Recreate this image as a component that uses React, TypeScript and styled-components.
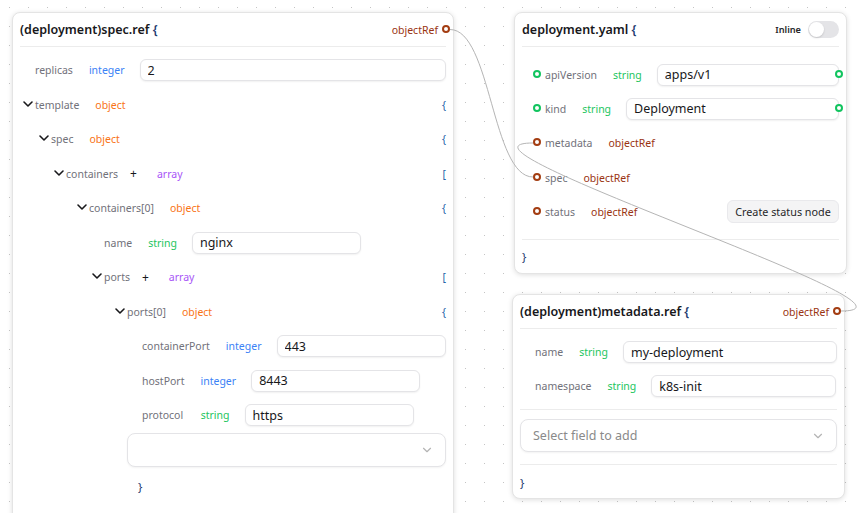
import styled, { createGlobalStyle } from "styled-components";
import { ChevronDown } from "lucide-react";

const GlobalStyle = createGlobalStyle`
  html, body {
    margin: 0;
    height: 100%;
    overflow: hidden;
    background: #fff;
  }
`;

const Canvas = styled.div`
  position: relative;
  width: 858px;
  height: 513px;
  overflow: hidden;
  font-family: "Noto Sans", "Open Sans", sans-serif;
  background-color: #fff;
  background-image: radial-gradient(circle, #c4c4c4 0.7px, transparent 0.9px);
  background-size: 19px 19px;
  background-position: 0px -2px;
`;

const Node = styled.div<{ $x: number; $y: number; $w: number; $h: number }>`
  position: absolute;
  left: ${(p) => p.$x}px;
  top: ${(p) => p.$y}px;
  width: ${(p) => p.$w}px;
  height: ${(p) => p.$h}px;
  box-sizing: border-box;
  padding: 0 7px;
  background: #fff;
  border: 1px solid #e4e4e4;
  border-radius: 8px;
  box-shadow: 0 1px 5px rgba(0, 0, 0, 0.13);
`;

const Header = styled.div`
  display: flex;
  align-items: center;
  height: 33px;
  border-bottom: 1px solid #ececec;
`;

const Title = styled.div`
  font-size: 12.5px;
  font-weight: 600;
  line-height: 32px;
  color: #18181b;
  white-space: nowrap;
`;

const Brace = styled.span`
  color: #1e3a6e;
`;

const HeaderRight = styled.div<{ $overhang?: number }>`
  margin-left: auto;
  margin-right: ${(p) => -(p.$overhang ?? 0)}px;
  display: flex;
  align-items: center;
  gap: 4px;
`;

const Body = styled.div<{ $top: number; $gap: number }>`
  display: flex;
  flex-direction: column;
  gap: ${(p) => p.$gap}px;
  padding-top: ${(p) => p.$top}px;
`;

const Row = styled.div<{ $indent: number }>`
  position: relative;
  display: flex;
  align-items: center;
  height: 22px;
  padding-left: ${(p) => p.$indent}px;
`;

const Toggle = styled(ChevronDown)`
  flex: none;
  width: 16px;
  height: 16px;
  margin: -2px -0.5px 0 -1.5px;
  color: #18181b;
  stroke-width: 2.4;
`;

const Label = styled.span<{ $mr?: number }>`
  font-size: 10.5px;
  color: #71717a;
  white-space: nowrap;
  margin-right: ${(p) => p.$mr ?? 16}px;
`;

const TYPE_COLORS: Record<string, string> = {
  integer: "#3b82f6",
  object: "#f97316",
  array: "#a855f7",
  string: "#22c55e",
  objectRef: "#9a3412",
};

const Type = styled.span<{ $kind: string }>`
  font-size: 10.5px;
  color: ${(p) => TYPE_COLORS[p.$kind]};
  white-space: nowrap;
`;

const Plus = styled.span`
  font-size: 12px;
  color: #18181b;
  margin-right: 20px;
  margin-left: -4px;
`;

const OpenBracket = styled.span`
  margin-left: auto;
  font-size: 10.5px;
  color: #2563a8;
`;

const Field = styled.input<{ $w: number }>`
  box-sizing: border-box;
  flex: none;
  width: ${(p) => p.$w}px;
  height: 22px;
  margin-left: 15px;
  padding: 0 7px;
  font-family: inherit;
  font-size: 12.5px;
  color: #18181b;
  background: #fff;
  border: 1px solid #e4e4e7;
  border-radius: 6px;
  box-shadow: 0 1px 2px rgba(0, 0, 0, 0.06);
  outline: none;
`;

const Dot = styled.span<{ $color: string }>`
  flex: none;
  box-sizing: border-box;
  width: 8px;
  height: 8px;
  margin-top: -1px;
  border-radius: 50%;
  background: #fff;
  border: 2px solid ${(p) => p.$color};
`;

const LeadDot = styled(Dot)`
  margin-right: 4px;
  margin-top: -2px;
`;

const TrailDot = styled(Dot)`
  position: absolute;
  right: -4px;
  top: 6px;
  margin-top: 0;
`;

const SelectBox = styled.div<{ $ml: number; $mt: number; $h: number }>`
  box-sizing: border-box;
  display: flex;
  align-items: center;
  justify-content: space-between;
  height: ${(p) => p.$h}px;
  margin-left: ${(p) => p.$ml}px;
  margin-top: ${(p) => p.$mt}px;
  padding: 0 11.5px 0 12px;
  font-size: 12.5px;
  color: #8a8a8a;
  background: #fff;
  border: 1px solid #e4e4e7;
  border-radius: 8px;
  box-shadow: 0 1px 2px rgba(0, 0, 0, 0.05);
`;

const SelectIcon = styled(ChevronDown)`
  width: 14px;
  height: 14px;
  color: #b4b4b4;
`;

const CloseLine = styled.div<{ $ml: number; $mt: number }>`
  margin-left: ${(p) => p.$ml}px;
  margin-top: ${(p) => p.$mt}px;
  font-size: 11.5px;
  line-height: 16px;
  color: #1e3a6e;
`;

const Divider = styled.div<{ $mt: number }>`
  height: 1px;
  margin-top: ${(p) => p.$mt}px;
  background: #ececec;
`;

const InlineLabel = styled.span`
  font-size: 9.2px;
  font-weight: 600;
  color: #27272a;
  margin-right: 3px;
`;

const Switch = styled.div`
  box-sizing: border-box;
  width: 31px;
  height: 17px;
  padding: 1px;
  border-radius: 9px;
  background: #e4e4e7;
`;

const Knob = styled.div`
  width: 15px;
  height: 15px;
  border-radius: 50%;
  background: #fff;
  box-shadow: 0 1px 2px rgba(0, 0, 0, 0.15);
`;

const ActionButton = styled.button`
  margin-left: auto;
  width: 112px;
  height: 23px;
  padding: 0;
  font-family: inherit;
  font-size: 10.8px;
  color: #27272a;
  background: #f4f4f5;
  border: 1px solid #e9e9ec;
  border-radius: 6px;
`;

const EdgeLayer = styled.svg`
  position: absolute;
  left: 0;
  top: 0;
  pointer-events: none;
`;

const Edge = styled.path`
  fill: none;
  stroke: #b5b5b5;
  stroke-width: 1;
`;

const BROWN = "#a33d12";
const GREEN = "#12c45f";

export default function App() {
  return (
    <>
      <GlobalStyle />
      <Canvas>
        <Node $x={12} $y={12} $w={442} $h={560}>
          <Header>
            <Title>
              (deployment)spec.ref <Brace>{"{"}</Brace>
            </Title>
            <HeaderRight $overhang={4}>
              <Type $kind="objectRef">objectRef</Type>
              <Dot $color={BROWN} />
            </HeaderRight>
          </Header>
          <Body $top={12.2} $gap={12.5}>
            <Row $indent={15}>
              <Label>replicas</Label>
              <Type $kind="integer">integer</Type>
              <Field $w={306} readOnly value="2" />
            </Row>
            <Row $indent={1}>
              <Toggle />
              <Label>template</Label>
              <Type $kind="object">object</Type>
              <OpenBracket>{"{"}</OpenBracket>
            </Row>
            <Row $indent={17}>
              <Toggle />
              <Label>spec</Label>
              <Type $kind="object">object</Type>
              <OpenBracket>{"{"}</OpenBracket>
            </Row>
            <Row $indent={32}>
              <Toggle />
              <Label>containers</Label>
              <Plus>+</Plus>
              <Type $kind="array">array</Type>
              <OpenBracket>[</OpenBracket>
            </Row>
            <Row $indent={55}>
              <Toggle />
              <Label>containers[0]</Label>
              <Type $kind="object">object</Type>
              <OpenBracket>{"{"}</OpenBracket>
            </Row>
            <Row $indent={84}>
              <Label>name</Label>
              <Type $kind="string">string</Type>
              <Field $w={169} readOnly value="nginx" />
            </Row>
            <Row $indent={70}>
              <Toggle />
              <Label>ports</Label>
              <Plus>+</Plus>
              <Type $kind="array">array</Type>
              <OpenBracket>[</OpenBracket>
            </Row>
            <Row $indent={93}>
              <Toggle />
              <Label>ports[0]</Label>
              <Type $kind="object">object</Type>
              <OpenBracket>{"{"}</OpenBracket>
            </Row>
            <Row $indent={122}>
              <Label>containerPort</Label>
              <Type $kind="integer">integer</Type>
              <Field $w={169} readOnly value="443" />
            </Row>
            <Row $indent={122}>
              <Label>hostPort</Label>
              <Type $kind="integer">integer</Type>
              <Field $w={169} readOnly value="8443" />
            </Row>
            <Row $indent={122}>
              <Label $mr={17.5}>protocol</Label>
              <Type $kind="string">string</Type>
              <Field $w={169} readOnly value="https" />
            </Row>
          </Body>
          <SelectBox $ml={107} $mt={6.8} $h={34}>
            <span />
            <SelectIcon />
          </SelectBox>
          <CloseLine $ml={118} $mt={12}>
            {"}"}
          </CloseLine>
        </Node>

        <Node $x={514} $y={12} $w={333} $h={262}>
          <Header>
            <Title>
              deployment.yaml <Brace>{"{"}</Brace>
            </Title>
            <HeaderRight>
              <InlineLabel>Inline</InlineLabel>
              <Switch>
                <Knob />
              </Switch>
            </HeaderRight>
          </Header>
          <Body $top={16.7} $gap={12.3}>
            <Row $indent={11}>
              <LeadDot $color={GREEN} />
              <Label>apiVersion</Label>
              <Type $kind="string">string</Type>
              <Field $w={182} readOnly value="apps/v1" />
              <TrailDot $color={GREEN} />
            </Row>
            <Row $indent={11}>
              <LeadDot $color={GREEN} />
              <Label>kind</Label>
              <Type $kind="string">string</Type>
              <Field $w={213} readOnly value="Deployment" />
              <TrailDot $color={GREEN} />
            </Row>
            <Row $indent={11}>
              <LeadDot $color={BROWN} />
              <Label>metadata</Label>
              <Type $kind="objectRef">objectRef</Type>
            </Row>
            <Row $indent={11}>
              <LeadDot $color={BROWN} />
              <Label>spec</Label>
              <Type $kind="objectRef">objectRef</Type>
            </Row>
            <Row $indent={11}>
              <LeadDot $color={BROWN} />
              <Label>status</Label>
              <Type $kind="objectRef">objectRef</Type>
              <ActionButton>Create status node</ActionButton>
            </Row>
          </Body>
          <Divider $mt={15.8} />
          <CloseLine $ml={0} $mt={9}>
            {"}"}
          </CloseLine>
        </Node>

        <Node $x={512} $y={294} $w={333} $h={205}>
          <Header>
            <Title>
              (deployment)metadata.ref <Brace>{"{"}</Brace>
            </Title>
            <HeaderRight $overhang={4}>
              <Type $kind="objectRef">objectRef</Type>
              <Dot $color={BROWN} />
            </HeaderRight>
          </Header>
          <Body $top={12} $gap={12}>
            <Row $indent={15}>
              <Label>name</Label>
              <Type $kind="string">string</Type>
              <Field $w={214} readOnly value="my-deployment" />
            </Row>
            <Row $indent={15}>
              <Label>namespace</Label>
              <Type $kind="string">string</Type>
              <Field $w={185} readOnly value="k8s-init" />
            </Row>
          </Body>
          <Divider $mt={12} />
          <SelectBox $ml={0} $mt={9} $h={33}>
            Select field to add
            <SelectIcon />
          </SelectBox>
          <Divider $mt={12} />
          <CloseLine $ml={0} $mt={10}>
            {"}"}
          </CloseLine>
        </Node>

        <EdgeLayer width={858} height={513}>
          <Edge d="M450 29.5 C491 29.5 492 177 533 177" />
          <Edge d="M841 311 C951 311 423 143 533 143" />
        </EdgeLayer>
      </Canvas>
    </>
  );
}
